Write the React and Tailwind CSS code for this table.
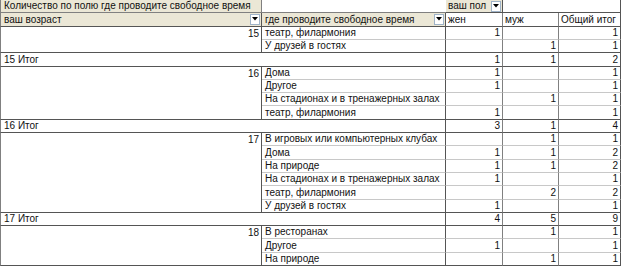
import React from 'react';

const groups = [
  {
    age: '15',
    items: [
      ['театр, филармония', '1', '', '1'],
      ['У друзей в гостях', '', '1', '1'],
    ],
    total: ['1', '1', '2'],
    span: 'row-span-2',
  },
  {
    age: '16',
    items: [
      ['Дома', '1', '', '1'],
      ['Другое', '1', '', '1'],
      ['На стадионах и в тренажерных залах', '', '1', '1'],
      ['театр, филармония', '1', '', '1'],
    ],
    total: ['3', '1', '4'],
    span: 'row-span-4',
  },
  {
    age: '17',
    items: [
      ['В игровых или компьютерных клубах', '', '1', '1'],
      ['Дома', '1', '1', '2'],
      ['На природе', '1', '1', '2'],
      ['На стадионах и в тренажерных залах', '1', '', '1'],
      ['театр, филармония', '', '2', '2'],
      ['У друзей в гостях', '1', '', '1'],
    ],
    total: ['4', '5', '9'],
    span: 'row-span-6',
  },
  {
    age: '18',
    items: [
      ['В ресторанах', '', '1', '1'],
      ['Другое', '1', '', '1'],
      ['На природе', '', '1', '1'],
    ],
    total: null,
    span: 'row-span-3',
  },
];

function Drop() {
  return (
    <span className="ml-auto mr-px flex h-[11px] w-[10px] shrink-0 items-center justify-center self-center border border-[#9fb3c8] bg-white">
      <svg width="6" height="4" viewBox="0 0 6 4">
        <path d="M0 0h6L3 3.5z" fill="#000" />
      </svg>
    </span>
  );
}

function Num({ v, last, bottom }) {
  return (
    <div
      className={
        'flex items-end justify-end overflow-hidden border-b pr-[2px] ' +
        (bottom ? 'border-b-[#555] ' : 'border-b-[#c8c8c8] ') +
        (last ? 'border-r border-r-[#555]' : 'border-r border-r-[#808080]')
      }
    >
      {v}
    </div>
  );
}

export default function App() {
  return (
    <div
      className="h-[266px] w-[623px] overflow-hidden bg-white text-[10px] leading-[12px] text-[#111]"
      style={{ fontFamily: '"Liberation Sans", Arial, sans-serif' }}
    >
      <div className="grid h-[266px] grid-cols-[262px_184px_57px_56px_62px] grid-rows-[repeat(20,minmax(0,1fr))]">
        {/* header row 1 */}
        <div className="flex items-end overflow-hidden whitespace-nowrap border-b border-l border-r border-[#808080] bg-[#ebe7d6] pl-[3px]">
          Количество по полю где проводите свободное время
        </div>
        <div className="border-b border-[#808080]" />
        <div className="flex items-end whitespace-nowrap border-b border-r border-[#555] bg-[#ebe7d6] pl-[2px]">
          <span>ваш пол</span>
          <Drop />
        </div>
        <div className="border-b border-[#555]" />
        <div className="border-b border-r border-[#555]" />

        {/* header row 2 */}
        <div className="flex items-end whitespace-nowrap border-b border-l border-r border-[#555] border-l-[#808080] bg-[#ebe7d6] pl-[3px]">
          <span>ваш возраст</span>
          <Drop />
        </div>
        <div className="flex items-end whitespace-nowrap border-b border-r border-[#555] bg-[#ebe7d6] pl-[3px]">
          <span>где проводите свободное время</span>
          <Drop />
        </div>
        <div className="flex items-end border-b border-r border-[#555] border-r-[#808080] pl-[2px]">жен</div>
        <div className="flex items-end border-b border-r border-[#555] border-r-[#808080] pl-[2px]">муж</div>
        <div className="flex items-end whitespace-nowrap border-b border-r border-[#555] pl-[2px]">Общий итог</div>

        {groups.map((g) => (
          <React.Fragment key={g.age}>
            <div
              className={
                g.span +
                ' col-start-1 flex justify-end border-b border-l border-r border-[#555] border-l-[#808080] pr-[2px] pt-px'
              }
            >
              <span>{g.age}</span>
            </div>
            {g.items.map((it, i) => {
              const bottom = i === g.items.length - 1;
              return (
                <React.Fragment key={g.age + i}>
                  <div
                    className={
                      'col-start-2 flex items-end overflow-hidden whitespace-nowrap border-b border-r border-r-[#555] pl-[3px] ' +
                      (bottom ? 'border-b-[#555]' : 'border-b-[#c8c8c8]')
                    }
                  >
                    {it[0]}
                  </div>
                  <Num v={it[1]} bottom={bottom} />
                  <Num v={it[2]} bottom={bottom} />
                  <Num v={it[3]} bottom={bottom} last />
                </React.Fragment>
              );
            })}
            {g.total && (
              <>
                <div className="col-span-2 col-start-1 flex items-end border-b border-l border-r border-[#555] border-l-[#808080] pl-[3px]">
                  {g.age} Итог
                </div>
                <Num v={g.total[0]} bottom />
                <Num v={g.total[1]} bottom />
                <Num v={g.total[2]} bottom last />
              </>
            )}
          </React.Fragment>
        ))}
      </div>
    </div>
  );
}
